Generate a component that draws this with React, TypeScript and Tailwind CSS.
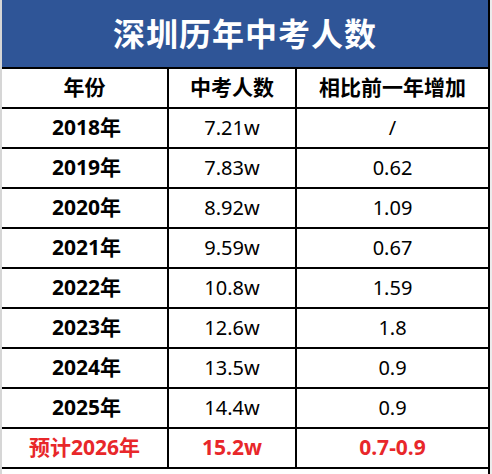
const rows = [
  { year: "2018年", count: "7.21w", inc: "/" },
  { year: "2019年", count: "7.83w", inc: "0.62" },
  { year: "2020年", count: "8.92w", inc: "1.09" },
  { year: "2021年", count: "9.59w", inc: "0.67" },
  { year: "2022年", count: "10.8w", inc: "1.59" },
  { year: "2023年", count: "12.6w", inc: "1.8" },
  { year: "2024年", count: "13.5w", inc: "0.9" },
  { year: "2025年", count: "14.4w", inc: "0.9" },
];

const font = { fontFamily: '"Noto Sans", "Noto Sans CJK SC", sans-serif' };

export default function App() {
  return (
    <div className="w-[492px] h-[474px] bg-white flex" style={font}>
      <div className="w-[2px] bg-[#d6d6d6]" />
      <div className="w-[488px] flex flex-col border-r-2 border-black">
        <div className="h-[69px] bg-[#2f5597] flex items-center justify-center text-white text-[32px] font-bold tracking-[1px] border-b-2 border-black">
          深圳历年中考人数
        </div>
        <div className="grid grid-cols-[167px_128px_1fr] h-[40px] border-b-2 border-black text-[21px] font-bold text-black">
          <div className="flex items-center justify-center border-r-2 border-black">年份</div>
          <div className="flex items-center justify-center border-r-2 border-black">中考人数</div>
          <div className="flex items-center justify-center">相比前一年增加</div>
        </div>
        {rows.map((r) => (
          <div key={r.year} className="grid grid-cols-[167px_128px_1fr] h-[40px] border-b-2 border-black text-[20px] text-black">
            <div className="flex items-center justify-center border-r-2 border-black font-bold text-[21px] pl-[4px]">{r.year}</div>
            <div className="flex items-center justify-center border-r-2 border-black">{r.count}</div>
            <div className="flex items-center justify-center">{r.inc}</div>
          </div>
        ))}
        <div className="grid grid-cols-[167px_128px_1fr] h-[40px] border-b-2 border-black text-[21px] font-bold text-[#e8272a]">
          <div className="flex items-center justify-center border-r-2 border-black">预计2026年</div>
          <div className="flex items-center justify-center border-r-2 border-black">15.2w</div>
          <div className="flex items-center justify-center">0.7-0.9</div>
        </div>
      </div>
      <div className="w-[2px] bg-[#ececec]" />
    </div>
  );
}
